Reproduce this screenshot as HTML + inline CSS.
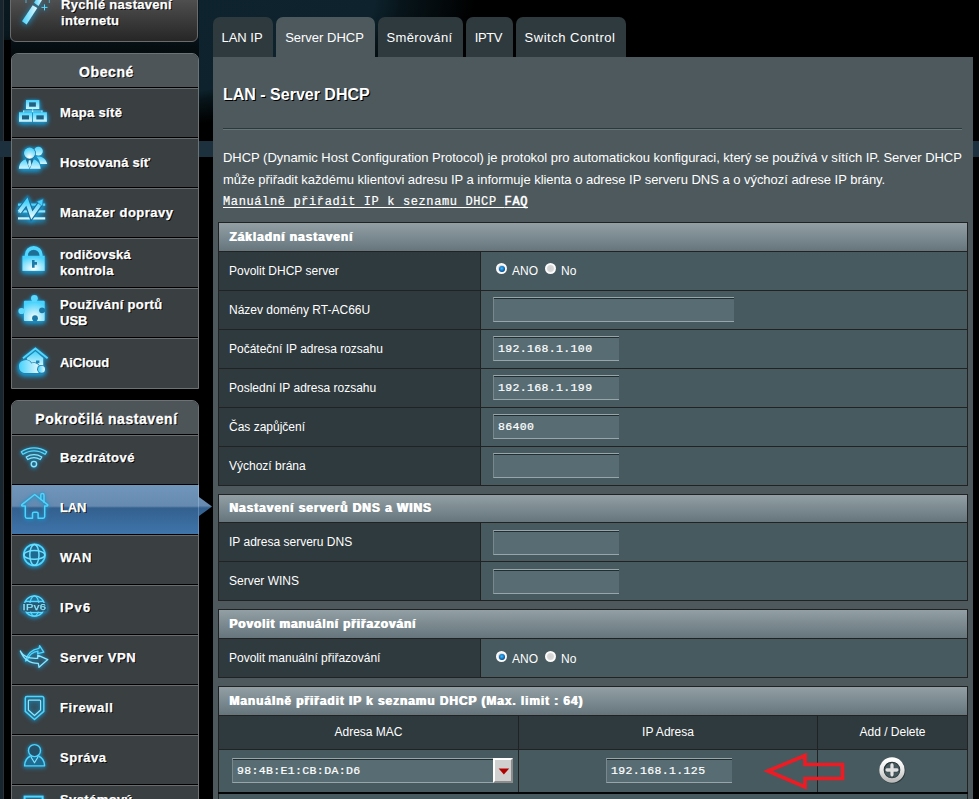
<!DOCTYPE html>
<html><head><meta charset="utf-8">
<style>
*{box-sizing:border-box;margin:0;padding:0}
html,body{width:979px;height:799px;overflow:hidden;background:#000}
body{position:relative;font-family:"Liberation Sans",sans-serif;color:#fff}
.abs{position:absolute}
#glow{left:0;top:0;width:979px;height:141px;background:radial-gradient(ellipse 475px 136px at 0px 0px,#0e242e 0%,#0d222c 79%,#071419 85%,#040b0e 92%,#000 100%)}
#sbdark{left:4px;top:0;width:195px;height:141px;background:linear-gradient(rgba(0,0,0,.3) 0px,rgba(0,0,0,.35) 34px,rgba(0,0,0,.6) 46px,rgba(0,0,0,.7) 60px,#000 100px)}
#band{left:0;top:141px;width:979px;height:16px;background:#1d303d}
#lstrip{left:0;top:0;width:3px;height:799px;background:#17262e}
#lline{left:3px;top:0;width:1px;height:799px;background:#2c3236}
#lblack{left:4px;top:40px;width:7px;height:101px;background:#000}
#lblack2{left:4px;top:157px;width:7px;height:642px;background:#000}

/* sidebar */
.box{position:absolute;left:11px;width:188px;border:1px solid #6d7275;background:#3a3f42;overflow:hidden}
.hd{position:absolute;left:0;width:186px;padding-left:3px;-webkit-text-stroke:.3px #fff;height:33px;background:#4e5558;text-align:center;font-weight:bold;font-size:14px;line-height:37px;text-shadow:1px 1px 0 #000;letter-spacing:.57px}
.sepb{position:absolute;left:0;width:186px;height:1px;background:#000}
.sepl{position:absolute;left:0;width:186px;height:1px;background:#676c6f}
.it{position:absolute;left:0;width:186px;height:48px;-webkit-text-stroke:.25px #fff;font-weight:bold;font-size:13px;text-shadow:1px 1px 0 #000;letter-spacing:.27px}
.it span{position:absolute;left:48px;top:0;line-height:48px;white-space:nowrap}
.it span.two{line-height:16px;top:8px}
.it svg{position:absolute;left:0;top:0;overflow:visible}

/* main */
#main{left:213px;top:57px;width:760px;height:742px;background:#4d595d}
.tab{position:absolute;top:17px;height:40px;background:#2f3a3e;border-radius:7px 7px 0 0;font-size:13px;line-height:42px;text-align:center;white-space:nowrap;padding-right:2px}
.tab.on{background:#4d595d}
#title{left:223px;top:85px;font-size:16px;font-weight:bold;line-height:20px;text-shadow:1px 1px 0 #000;white-space:nowrap}
.desc{position:absolute;left:223px;font-size:13px;line-height:22px;white-space:nowrap;letter-spacing:-.027px}
#faq{left:223px;top:192px;font-family:"Liberation Mono",monospace;font-size:12px;letter-spacing:.62px;-webkit-text-stroke:.2px #fff;line-height:20px;text-decoration:underline;text-underline-offset:1.5px;white-space:nowrap}
#faq b{font-weight:normal;-webkit-text-stroke:.6px #fff}

.tbl{position:absolute;left:218px;width:750px;background:#222}
.th0{position:absolute;left:1px;width:748px;background:linear-gradient(#92a0a5,#66757c);font-weight:bold;font-size:12px;padding-left:10px;letter-spacing:.92px;text-shadow:.9px 0 0 #fff;white-space:nowrap}
.th{position:absolute;left:1px;width:261px;background:#2f3a3e;font-size:12px;padding-left:10px;white-space:nowrap}
.td{position:absolute;left:263px;width:486px;background:#475a5f}
.inp{position:absolute;height:25px;background:#576d73;border-top:1px solid #98a5a9;border-left:1px solid #7a878b;border-bottom:1px solid #98a5a9;box-shadow:inset 0 1px 0 #222d30;font-family:"Liberation Mono",monospace;font-size:11.5px;letter-spacing:.36px;-webkit-text-stroke:.22px #fff;line-height:24px;padding-left:4px;padding-top:0;white-space:nowrap}
.radio{position:absolute;width:11px;height:11px;border-radius:50%;background:radial-gradient(circle at 50% 50%,#d0d0d0 0%,#d8d8d8 38%,#ffffff 56%,#f4f4f4 72%,#a9b1b3 88%,#6f7b7e 100%)}
.radio.on:after{content:"";position:absolute;left:2.5px;top:2.5px;width:6px;height:6px;border-radius:50%;background:radial-gradient(circle at 45% 40%,#3dbaf4 0%,#1a8ad6 35%,#0c569c 62%,#1d3d5a 88%,#4a5b68 100%)}
.rl{position:absolute;font-size:12px;line-height:14px}

.it.act{background:linear-gradient(#7196bb 0%,#668ab0 43%,#33608e 47%,#3f75ab 100%)}
.it i{font-style:normal}
#qis{left:10px;top:-12px;width:188px;height:54px;border:1px solid #6b6b6b;border-radius:6px;background:linear-gradient(#5c5c5c 0%,#4a4a4a 30%,#262626 100%);overflow:hidden}
#qis svg{top:11px !important}
#qt{-webkit-text-stroke:.25px #fff;position:absolute;left:50px;top:8px;font-weight:bold;font-size:13px;line-height:16px;text-shadow:1px 1px 0 #000;letter-spacing:.3px;white-space:nowrap}
.ch{position:absolute;height:33px;line-height:33px;background:#2f3a3e;font-size:12px;text-align:center}
.cd{position:absolute;height:42px;background:#475a5f}
#dd{position:absolute;left:274px;top:8px;width:20px;height:25px;background:#d0d0d0;border-top:2px solid #fff;border-left:2px solid #fff;border-right:2px solid #8c8c8c;border-bottom:2px solid #8c8c8c;overflow:hidden}
#dd svg{position:absolute;left:-2px;top:-2px}
#add{position:absolute;left:59.2px;top:4.5px;width:30px;height:30px}
</style></head><body>
<div id="glow" class="abs"></div>
<div id="sbdark" class="abs"></div>
<div id="lstrip" class="abs"></div><div id="lline" class="abs"></div>
<div id="lblack" class="abs"></div><div id="lblack2" class="abs"></div>
<div id="band" class="abs"></div>

<!-- SIDEBAR -->
<svg width="0" height="0" style="position:absolute"><defs>
<linearGradient id="g" x1="0" y1="0" x2="0" y2="1"><stop offset="0" stop-color="#46d2fc"/><stop offset="1" stop-color="#d6f5fd"/></linearGradient>
<radialGradient id="gh" cx=".5" cy=".85" r=".8"><stop offset="0" stop-color="#ffffff"/><stop offset=".45" stop-color="#a8e9fb"/><stop offset="1" stop-color="#46d2fc"/></radialGradient>
<linearGradient id="gw" x1="0" y1="0" x2="1" y2="0"><stop offset="0" stop-color="#46d2fc"/><stop offset="1" stop-color="#e4f8fd"/></linearGradient>
</defs></svg><div class="abs" id="qis"><svg width="186" height="48" viewBox="0 0 186 48" style="position:absolute;left:0;top:0;filter:drop-shadow(0 1px 3px #1a9ad2)">
<path d="M11 21.2 L21.7 5.2 L26.3 8 L15.6 24.5z" fill="url(#gw)"/>
<path d="M23 2.8 L26.5 -3 L31 0 L27.5 6z" fill="url(#gw)"/>
<path d="M30.5 7.4h6 M33.5 4.4v6" stroke="#5ad8fd" stroke-width="1" fill="none"/>
<path d="M15 0v3 M38.3 0v3" stroke="#5ad8fd" stroke-width="1" opacity=".7"/>
</svg><div id="qt">Rychlé nastavení<br>internetu</div></div><div class="box" style="top:53px;height:336px;border-radius:7px 7px 0 0"><div class="hd" style="top:0">Obecné</div><div class="sepb" style="top:33px"></div><div class="sepl" style="top:34px"></div><div class="it" style="top:35px"><svg width="186" height="48" viewBox="0 0 186 48" style="text-shadow:none;-webkit-text-stroke:0;filter:drop-shadow(0 2px 2.5px #1a9ad2) drop-shadow(0 0 1.2px #1787bb)"><g fill="url(#g)">
<path d="M17.1 13.3h6.8v4.5h-6.8z M10 26.2h7v4.4h-7z M24.3 26.2h7.5v4.4h-7.5z" fill="#23607f"/>
<path fill-rule="evenodd" d="M14 11h13.3v9H14z M17.1 13.3v4.5h6.8v-4.5z"/>
<path fill-rule="evenodd" d="M7 23.3h13v9.4H7z M10 26.2v4.4h7v-4.4z"/>
<path fill-rule="evenodd" d="M21 23.3h13.9v9.4H21z M24.3 26.2v4.4h7.5v-4.4z"/>
<path d="M20 20h1.2v3.3H20z" />
<path d="M11 21.3h19.5v1.2H11z" opacity=".75"/>
<path d="M11 21.3h1.2v2H11z M29.3 21.3h1.2v2h-1.2z"/>
</g></svg><span style="margin-top:0px"><i style="letter-spacing:0.34px">Mapa sítě</i></span></div><div class="sepb" style="top:83px"></div><div class="sepl" style="top:84px"></div><div class="it" style="top:85px"><svg width="186" height="48" viewBox="0 0 186 48" style="text-shadow:none;-webkit-text-stroke:0;filter:drop-shadow(0 2px 2.5px #1a9ad2) drop-shadow(0 0 1.2px #1787bb)"><g>
<circle cx="26.4" cy="12.1" r="4.4" fill="url(#g)"/>
<path d="M24.5 17.8 C29.5 16.6 33.8 19.5 35.2 25 L28.3 25 C27.6 21.8 26.3 19.6 24.5 17.8z" fill="url(#g)"/>
<path d="M6.8 29.7 C7.4 23.6 11 20 17.7 19.6 C24.4 20 28 23.6 28.6 29.7z" fill="url(#g)"/>
<path d="M13.6 20.2 L17.7 30.2 L21.8 20.2 L20 19.6 L15.4 19.6z" fill="#1b6f99"/>
<path d="M16.8 21.2h1.8l.7 4.6 -1.6 3.4 -1.6-3.4z" fill="#bdeefb"/>
<circle cx="17.6" cy="14.1" r="6.3" fill="#1f6d95"/>
<circle cx="17.6" cy="14.1" r="5.6" fill="url(#gh)"/>
</g></svg><span style="margin-top:0px"><i style="letter-spacing:0.24px">Hostovaná síť</i></span></div><div class="sepb" style="top:133px"></div><div class="sepl" style="top:134px"></div><div class="it" style="top:135px"><svg width="186" height="48" viewBox="0 0 186 48" style="text-shadow:none;-webkit-text-stroke:0;filter:drop-shadow(0 2px 2.5px #1a9ad2) drop-shadow(0 0 1.2px #1787bb)"><g>
<path d="M6 14.5h27.2v2.3H6z M6 21.3h27.2v2.3H6z M6 28.3h27.2v2.3H6z" fill="url(#g)"/>
<path d="M7.2 23 L14.9 12.6 L19.8 26.5 L28.5 14.5" fill="none" stroke="#1c6f9c" stroke-width="6.2" stroke-linejoin="miter"/>
<path d="M7.2 23 L14.9 12.6 L19.8 26.5 L28 15" fill="none" stroke="url(#g)" stroke-width="3.8" stroke-linejoin="miter"/>
<path d="M31.2 9.8 L24.6 12.6 L30.4 17.6z" fill="#46d2fc" stroke="#1c6f9c" stroke-width=".6"/>
</g></svg><span style="margin-top:0px"><i style="letter-spacing:0.48px">Manažer dopravy</i></span></div><div class="sepb" style="top:183px"></div><div class="sepl" style="top:184px"></div><div class="it" style="top:185px"><svg width="186" height="48" viewBox="0 0 186 48" style="text-shadow:none;-webkit-text-stroke:0;filter:drop-shadow(0 2px 2.5px #1a9ad2) drop-shadow(0 0 1.2px #1787bb)"><g>
<path d="M12.8 17 v-1.2 a8.9 8.9 0 0 1 17.8 0 v1.2 h-3.2 v-.6 a5.7 5.7 0 0 0 -11.4 0 v.6z" fill="#52d6fd"/>
<path d="M16 16.8 a5.7 5.7 0 0 1 11.4 0z" fill="#1f6f95"/>
<rect x="10.4" y="16.8" width="22.3" height="15.1" fill="url(#gh)"/>
<path d="M20 21h2.6v2h2.4v2.8h-2.4v2.9H20z" fill="#1c79a6"/>
</g></svg><span class="two" style="margin-top:0px"><i style="letter-spacing:0.23px">rodičovská</i><br><i style="letter-spacing:0.3px">kontrola</i></span></div><div class="sepb" style="top:233px"></div><div class="sepl" style="top:234px"></div><div class="it" style="top:235px"><svg width="186" height="48" viewBox="0 0 186 48" style="text-shadow:none;-webkit-text-stroke:0;filter:drop-shadow(0 2px 2.5px #1a9ad2) drop-shadow(0 0 1.2px #1787bb)"><g>
<rect x="11.9" y="11.8" width="20.8" height="20.3" rx="1" fill="url(#gh)"/>
<circle cx="22.4" cy="9.3" r="3.4" fill="#5ad8fd"/>
<rect x="20.2" y="9.3" width="4.4" height="3.5" fill="#5ad8fd"/>
<circle cx="9.5" cy="22" r="3.1" fill="#62dafd"/>
<rect x="9.5" y="19.9" width="3.4" height="4.2" fill="#62dafd"/>
<circle cx="30" cy="21.3" r="2.9" fill="#1c79a6"/>
<rect x="30" y="19.6" width="2.8" height="3.4" fill="#1c79a6"/>
<circle cx="23" cy="29.2" r="2.9" fill="#1c79a6"/>
<rect x="21.3" y="29.2" width="3.4" height="3" fill="#1c79a6"/>
</g></svg><span class="two" style="margin-top:0px"><i style="letter-spacing:0.33px">Používání portů</i><br><i style="letter-spacing:0.02px">USB</i></span></div><div class="sepb" style="top:283px"></div><div class="sepl" style="top:284px"></div><div class="it" style="top:285px"><svg width="186" height="48" viewBox="0 0 186 48" style="text-shadow:none;-webkit-text-stroke:0;filter:drop-shadow(0 2px 2.5px #1a9ad2) drop-shadow(0 0 1.2px #1787bb)"><g>
<path d="M11 19.2 L23.4 9.4 L35.6 19.2" fill="none" stroke="#52d6fd" stroke-width="1.9" stroke-linejoin="miter"/>
<path d="M15 19 L23.4 12.3 L31.2 19 V27 H15z" fill="url(#g)"/>
<rect x="24" y="21.5" width="3.4" height="2.6" fill="#1c86b8"/>
<path d="M7 28 a6.6 6 0 0 1 12.4 -3.6 a5.4 4.6 0 0 1 7.4 2.2 L27.5 34 H12 a5.8 5.8 0 0 1 -5 -6z" fill="#3a3f42" stroke="#1c79a6" stroke-width="1.2"/>
<path d="M7 28 a6.6 6 0 0 1 12.4 -3.6 a5.4 4.6 0 0 1 7.4 2.2 L27.5 34 H12 a5.8 5.8 0 0 1 -5 -6z" fill="url(#gw)"/>
<circle cx="29.3" cy="30.3" r="4.2" fill="#1c79a6"/>
<circle cx="29.5" cy="30.3" r="3.5" fill="url(#gw)"/>
</g></svg><span style="margin-top:0px"><i style="letter-spacing:-0.12px">AiCloud</i></span></div></div><div class="box" style="top:400px;height:420px;border-radius:7px 7px 0 0"><div class="hd" style="top:0">Pokročilá nastavení</div><div class="sepb" style="top:33px"></div><div class="sepl" style="top:34px"></div><div class="it" style="top:35px"><svg width="186" height="48" viewBox="0 0 186 48" style="text-shadow:none;-webkit-text-stroke:0;filter:drop-shadow(0 1.5px 2.2px rgba(26,154,210,.85)) drop-shadow(0 0 1px rgba(23,135,187,.6))"><g fill="none" stroke="#58d8fd" stroke-width="1.25" stroke-linejoin="round">
<path d="M9.27 15.81 A22.2 22.2 0 0 1 34.73 15.81 L33.01 18.27 A19.2 19.2 0 0 0 10.99 18.27Z"/>
<path d="M14.17 20.97 A15.2 15.2 0 0 1 29.83 20.97 L28.28 23.54 A12.2 12.2 0 0 0 15.72 23.54Z" stroke="#8ce6fd"/>
<circle cx="21.9" cy="28.1" r="2.7" stroke="#8ce6fd" stroke-width="1.4"/>
</g></svg><span style="margin-top:-2px"><i style="letter-spacing:0.49px">Bezdrátové</i></span></div><div class="sepb" style="top:83px"></div><div class="sepl" style="top:84px"></div><div class="it act" style="top:84px;height:49px"><div style="position:absolute;left:0;top:1px;width:186px;height:48px"><svg width="186" height="48" viewBox="0 0 186 48" style="text-shadow:none;-webkit-text-stroke:0;filter:drop-shadow(0 1.5px 2.2px rgba(26,154,210,.85)) drop-shadow(0 0 1px rgba(23,135,187,.6))"><g fill="none" stroke="#4fd5fd" stroke-width="1.5" stroke-linejoin="round" stroke-linecap="round">
<path d="M28.8 13.6 V9 a1.6 1.6 0 0 1 3.2 0 V16.2"/>
<path d="M13.3 20 H10.4 a.8 .8 0 0 1 -.5 -1.4 L22.7 8.5 L35.5 18.6 a.8 .8 0 0 1 -.5 1.4 H32.7 V30.6 a1.6 1.6 0 0 1 -1.6 1.6 H26.1 V27.6 a1.4 1.4 0 0 0 -1.4 -1.4 H21.9 a1.4 1.4 0 0 0 -1.4 1.4 V32.2 H14.9 a1.6 1.6 0 0 1 -1.6 -1.6z"/>
</g></svg><span style="margin-top:-2px"><i style="letter-spacing:-0.14px">LAN</i></span></div></div><div class="sepb" style="top:133px"></div><div class="sepl" style="top:134px"></div><div class="it" style="top:135px"><svg width="186" height="48" viewBox="0 0 186 48" style="text-shadow:none;-webkit-text-stroke:0;filter:drop-shadow(0 1.5px 2.2px rgba(26,154,210,.85)) drop-shadow(0 0 1px rgba(23,135,187,.6))"><g fill="none" stroke="#6fdffd" stroke-width="1.5">
<circle cx="22.4" cy="18.9" r="10.6" fill="#1f5f82" fill-opacity=".75" stroke="#4fd5fd" stroke-width="1.7"/>
<ellipse cx="22.4" cy="18.9" rx="4.6" ry="10.4"/>
<ellipse cx="22.4" cy="18.9" rx="10.4" ry="4.3"/>
</g></svg><span style="margin-top:-2px"><i style="letter-spacing:0.55px">WAN</i></span></div><div class="sepb" style="top:183px"></div><div class="sepl" style="top:184px"></div><div class="it" style="top:185px"><svg width="186" height="48" viewBox="0 0 186 48" style="text-shadow:none;-webkit-text-stroke:0;filter:drop-shadow(0 1.5px 2.2px rgba(26,154,210,.85)) drop-shadow(0 0 1px rgba(23,135,187,.6))"><g fill="none" stroke="#5ad8fd" stroke-width="1.2">
<circle cx="22.4" cy="20" r="10.2" fill="#1f5f82" fill-opacity=".35"/>
<ellipse cx="22.4" cy="20" rx="4.6" ry="10.2"/>
<path d="M12.8 15.4 H32 M14 26.6 H30.8"/>
<rect x="9.6" y="17" width="25.6" height="8.4" rx="1.5" fill="#2b5870" stroke="none"/>
<text x="22.4" y="24.4" text-anchor="middle" font-family="Liberation Sans" font-weight="normal" font-size="9.4" fill="#86e4fd" stroke="#86e4fd" stroke-width=".25" textLength="23.6" lengthAdjust="spacingAndGlyphs">IPv6</text>
</g></svg><span style="margin-top:-2px"><i style="letter-spacing:1.14px">IPv6</i></span></div><div class="sepb" style="top:233px"></div><div class="sepl" style="top:234px"></div><div class="it" style="top:235px"><svg width="186" height="48" viewBox="0 0 186 48" style="text-shadow:none;-webkit-text-stroke:0;filter:drop-shadow(0 1.5px 2.2px rgba(26,154,210,.85)) drop-shadow(0 0 1px rgba(23,135,187,.6))"><g fill="none" stroke="#5ad8fd" stroke-width="1.3" stroke-linejoin="round" stroke-linecap="round">
<path d="M13.5 25 C15 18 20 13.5 27 12.3 L27.6 9.6 L31.8 16.2 L25.6 17.6 L26 15.2 C21 16 17 19 15 24.5z" stroke="#4fd5fd"/>
<path d="M8.3 15 C11 20 16 23 25.7 22.3 L25.7 19.1 L35.8 23.6 L27 31.3 L26.3 27.4 C17 27.5 11.5 23 8.3 15z" stroke="#8ce6fd"/>
</g></svg><span style="margin-top:-2px"><i style="letter-spacing:0.54px">Server VPN</i></span></div><div class="sepb" style="top:283px"></div><div class="sepl" style="top:284px"></div><div class="it" style="top:285px"><svg width="186" height="48" viewBox="0 0 186 48" style="text-shadow:none;-webkit-text-stroke:0;filter:drop-shadow(0 1.5px 2.2px rgba(26,154,210,.85)) drop-shadow(0 0 1px rgba(23,135,187,.6))"><g fill="none" stroke-linejoin="round">
<path d="M14.9 10.6 H30.2 a1.6 1.6 0 0 1 1.6 1.6 V25.4 L22.5 33.5 L13.3 25.4 V12.2 a1.6 1.6 0 0 1 1.6 -1.6z" stroke="#4fd5fd" stroke-width="1.5"/>
<path d="M17.2 14.2 H27.8 a.8 .8 0 0 1 .8 .8 V24 L22.5 29.5 L16.4 24 V15 a.8 .8 0 0 1 .8 -.8z" stroke="#8ce6fd" stroke-width="1.2" fill="#1f5f82" fill-opacity=".12"/>
</g></svg><span style="margin-top:-2px"><i style="letter-spacing:0.63px">Firewall</i></span></div><div class="sepb" style="top:333px"></div><div class="sepl" style="top:334px"></div><div class="it" style="top:335px"><svg width="186" height="48" viewBox="0 0 186 48" style="text-shadow:none;-webkit-text-stroke:0;filter:drop-shadow(0 1.5px 2.2px rgba(26,154,210,.85)) drop-shadow(0 0 1px rgba(23,135,187,.6))"><g fill="#1f5f82" fill-opacity=".55" stroke="#4fd5fd" stroke-width="1.4" stroke-linejoin="round">
<path d="M12.6 29.9 C12.8 24.5 15 21.5 18.5 20 H26.5 C30 21.5 32.4 24.5 32.6 29.9z"/>
<path d="M19 21 L22.5 26.8 L26 21" fill="none" stroke="#8ce6fd" stroke-width="1.1"/>
<circle cx="22.5" cy="14.6" r="6" fill="#24506a" fill-opacity="1"/>
</g></svg><span style="margin-top:-2px"><i style="letter-spacing:0.52px">Správa</i></span></div><div class="sepb" style="top:383px"></div><div class="sepl" style="top:384px"></div><div class="it" style="top:385px"><svg width="186" height="48" viewBox="0 0 186 48" style="text-shadow:none;-webkit-text-stroke:0;filter:drop-shadow(0 1.5px 2.2px rgba(26,154,210,.85)) drop-shadow(0 0 1px rgba(23,135,187,.6))"><g fill="none" stroke="#4fd5fd" stroke-width="2"><rect x="12.6" y="10.6" width="18" height="14"/></g></svg><span class="two" style="margin-top:-2px"><i style="letter-spacing:0.4px">Systémový</i><br><i style="letter-spacing:0.4px">protokol</i></span></div><div class="sepb" style="top:433px"></div><div class="sepl" style="top:434px"></div></div><svg class="abs" style="left:199px;top:486px" width="14" height="48" viewBox="0 0 14 48"><defs><linearGradient id="la" gradientUnits="userSpaceOnUse" x1="0" y1="-1" x2="0" y2="48"><stop offset="0" stop-color="#7196bb"/><stop offset=".42" stop-color="#668ab0"/><stop offset=".47" stop-color="#33608e"/><stop offset="1" stop-color="#3f75ab"/></linearGradient></defs><path d="M0 11 L13 20.6 L0 30z" fill="url(#la)"/></svg><div class="abs" style="left:198px;top:485px;width:1px;height:49px;background:linear-gradient(#8fb0d0 0%,#84a5c6 43%,#5b83ad 47%,#6794c4 100%)"></div>

<!-- TABS -->
<div class="tab" style="left:213px;width:60px">LAN IP</div>
<div class="tab on" style="left:276px;width:99px">Server DHCP</div>
<div class="tab" style="left:378px;width:85px;letter-spacing:.35px">Směrování</div>
<div class="tab" style="left:466px;width:47px;letter-spacing:-.4px">IPTV</div>
<div class="tab" style="left:516px;width:110px;letter-spacing:.5px">Switch Control</div>

<div id="main" class="abs"></div>
<div id="title" class="abs">LAN - Server DHCP</div>
<div class="abs" style="left:223px;top:128px;width:739px;height:1px;background:#2e373a"></div>
<div class="abs" style="left:223px;top:129px;width:739px;height:1px;background:#66757a"></div>
<div class="desc" style="top:147px">DHCP (Dynamic Host Configuration Protocol) je protokol pro automatickou konfiguraci, který se používá v sítích IP. Server DHCP</div>
<div class="desc" style="top:169px">může přiřadit každému klientovi adresu IP a informuje klienta o adrese IP serveru DNS a o výchozí adrese IP brány.</div>
<div id="faq" class="abs">Manuálně přiřadit IP k seznamu DHCP <b>FAQ</b></div>

<!-- TABLES -->
<div class="tbl" style="top:222px;height:264px"><div class="th0" style="top:1px;height:28px;line-height:28px;letter-spacing:0.92px">Základní nastavení</div><div class="th" style="top:30px;height:38px;line-height:38px">Povolit DHCP server</div><div class="td" style="top:30px;height:38px"><div class="radio on" style="left:15.300000000000011px;top:11.1px"></div><div class="rl" style="left:31px;top:12px">ANO</div><div class="radio" style="left:64.29999999999995px;top:11.1px"></div><div class="rl" style="left:80px;top:12px">No</div></div><div class="th" style="top:69px;height:38px;line-height:38px">Název domény RT-AC66U</div><div class="td" style="top:69px;height:38px"><div class="inp" style="left:12px;top:6px;width:241px"></div></div><div class="th" style="top:108px;height:38px;line-height:38px">Počáteční IP adresa rozsahu</div><div class="td" style="top:108px;height:38px"><div class="inp" style="left:12px;top:6px;width:126px">192.168.1.100</div></div><div class="th" style="top:147px;height:38px;line-height:38px">Poslední IP adresa rozsahu</div><div class="td" style="top:147px;height:38px"><div class="inp" style="left:12px;top:6px;width:126px">192.168.1.199</div></div><div class="th" style="top:186px;height:38px;line-height:38px">Čas zapůjčení</div><div class="td" style="top:186px;height:38px"><div class="inp" style="left:12px;top:6px;width:126px">86400</div></div><div class="th" style="top:225px;height:38px;line-height:38px">Výchozí brána</div><div class="td" style="top:225px;height:38px"><div class="inp" style="left:12px;top:6px;width:126px"></div></div></div><div class="tbl" style="top:494px;height:107px"><div class="th0" style="top:1px;height:27px;line-height:27px;letter-spacing:0.92px">Nastavení serverů DNS a WINS</div><div class="th" style="top:29px;height:38px;line-height:38px">IP adresa serveru DNS</div><div class="td" style="top:29px;height:38px"><div class="inp" style="left:12px;top:7px;width:126px"></div></div><div class="th" style="top:68px;height:38px;line-height:38px">Server WINS</div><div class="td" style="top:68px;height:38px"><div class="inp" style="left:12px;top:7px;width:126px"></div></div></div><div class="tbl" style="top:609px;height:69px"><div class="th0" style="top:1px;height:28px;line-height:28px;letter-spacing:0.84px">Povolit manuální přiřazování</div><div class="th" style="top:30px;height:38px;line-height:38px">Povolit manuální přiřazování</div><div class="td" style="top:30px;height:38px"><div class="radio on" style="left:15.300000000000011px;top:12.1px"></div><div class="rl" style="left:31px;top:13px">ANO</div><div class="radio" style="left:64.29999999999995px;top:12.1px"></div><div class="rl" style="left:80px;top:13px">No</div></div></div><div class="tbl" style="top:686px;height:108px"><div class="th0" style="top:1px;height:28px;line-height:28px;letter-spacing:0.9px">Manuálně přiřadit IP k seznamu DHCP (Max. limit : 64)</div><div class="ch" style="left:1px;width:299px;top:30px">Adresa MAC</div><div class="ch" style="left:301px;width:298px;top:30px">IP Adresa</div><div class="ch" style="left:600px;width:149px;top:30px">Add / Delete</div><div class="cd" style="left:1px;width:299px;top:64px"><div class="inp" style="left:13px;top:8px;width:261px">98:4B:E1:CB:DA:D6</div><div id="dd"><svg width="20" height="25" viewBox="0 0 20 25"><path d="M5.6 10.4h10.6l-5.3 6z" fill="#b10000"/></svg></div></div><div class="cd" style="left:301px;width:298px;top:64px"><div class="inp" style="left:87px;top:8px;width:126px">192.168.1.125</div></div><div class="cd" style="left:600px;width:149px;top:64px"><div id="add"><svg width="30" height="30" viewBox="0 0 30 30"><defs><linearGradient id="rg" x1="0" y1="0" x2="0" y2="1"><stop offset="0" stop-color="#ffffff"/><stop offset=".45" stop-color="#e9e9e9"/><stop offset="1" stop-color="#bdbdbd"/></linearGradient><linearGradient id="pg" x1="0" y1="0" x2="0" y2="1"><stop offset="0" stop-color="#f6f6f6"/><stop offset="1" stop-color="#c9c9c9"/></linearGradient></defs><circle cx="15.7" cy="15.8" r="10.5" fill="none" stroke="#1d282b" stroke-opacity=".7" stroke-width="4.4"/><circle cx="15" cy="15" r="8.2" fill="none" stroke="#1f2a2d" stroke-opacity=".55" stroke-width="1.6"/><circle cx="15" cy="15" r="10.5" fill="none" stroke="url(#rg)" stroke-width="4.3"/><path d="M15 10V20M10 15H20" stroke="#263236" stroke-opacity=".55" stroke-width="3.6" stroke-linecap="round" fill="none" transform="translate(.4 .4)"/><path d="M15 10V20M10 15H20" stroke="url(#pg)" stroke-width="2.8" stroke-linecap="round" fill="none"/><path d="M15 10V20" stroke="#e4e4e4" stroke-width="2.8" stroke-linecap="round" fill="none"/><path d="M10 15H20" stroke="#e0e0e0" stroke-width="2.8" stroke-linecap="round" fill="none"/></svg></div></div></div><svg class="abs" style="left:755px;top:745px" width="100" height="52" viewBox="755 745 100 52"><path d="M768 771 L805 755.5 L805 764.5 L842.5 764.5 L842.5 778.5 L805 778.5 L805 787 Z" fill="none" stroke="#ed1c24" stroke-width="3.7" stroke-linejoin="miter"/></svg><div class="abs" style="left:218px;top:792px;width:750px;height:7px;background:#222"><div class="abs" style="left:0;top:0;width:750px;height:2px;background:#050505"></div><div class="abs" style="left:1px;top:2px;width:748px;height:5px;background:#475a5f"></div></div>
</body></html>
